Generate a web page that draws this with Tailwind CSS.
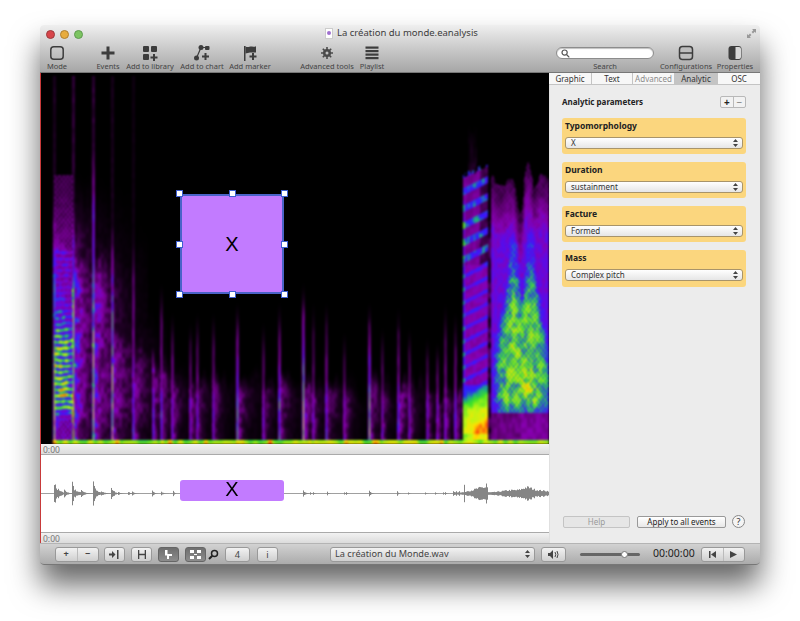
<!DOCTYPE html>
<html lang="en">
<head>
<meta charset="UTF-8">
<title>La création du monde.eanalysis</title>
<script src="https://cdn.jsdelivr.net/npm/@tailwindcss/browser@4"></script>
</head>
<body class="bg-white font-['Noto_Sans',sans-serif] text-[#333]">
<div class="w-[800px] h-[621px] pt-[25px] pl-[40px] overflow-hidden">
  <div class="w-[720px] h-[540px] flex flex-col rounded-[4px] shadow-[0_20px_30px_rgba(0,0,0,0.6)]">

    <!-- title bar + toolbar -->
    <div class="relative h-[48px] shrink-0 rounded-t-[4px] bg-linear-to-b from-[#efefef] to-[#a6a6a6] border-b border-[#777]">
      <div class="flex items-center gap-[5px] pl-[6px] pt-[3px] h-[15px]">
        <span class="w-[9px] h-[9px] rounded-full bg-[#d8454a] border border-[#9c3a3c]"></span>
        <span class="w-[9px] h-[9px] rounded-full bg-[#e8ac3e] border border-[#b08030]"></span>
        <span class="w-[9px] h-[9px] rounded-full bg-[#7cc461] border border-[#5f9a50]"></span>
      </div>
      <div class="absolute top-[1px] left-[285px] flex items-center gap-[4px] text-[9.500px] leading-[14px] text-[#3c3c3c] whitespace-nowrap">
        <span class="w-[8px] h-[11px] bg-white border border-[#ccc] flex items-center justify-center"><span class="w-[4px] h-[4px] rounded-full bg-[#a070d0]"></span></span>
        La création du monde.eanalysis
      </div>
      <svg class="absolute top-[3px] right-[3px]" width="11" height="11" viewBox="0 0 11 11" fill="#999"><path d="M6 1h4v4l-1.300-1.300L7 5.400 5.600 4l1.700-1.700zM5 10H1V6l1.300 1.300L4 5.600 5.400 7 3.700 8.700z"/></svg>

      <div class="flex items-start mt-[4px] text-[7.500px] leading-[10px] text-[#444]">
        <div class="w-[34px] flex flex-col items-center">
          <svg width="18" height="18" viewBox="0 0 18 18"><rect x="2.800" y="2.800" width="12.400" height="12.400" rx="3" fill="none" stroke="#3d3d3d" stroke-width="1.500"/></svg>
          <span class="-mt-[1px]">Mode</span>
        </div>
        <div class="w-[34px] ml-[17px] flex flex-col items-center">
          <svg width="18" height="18" viewBox="0 0 18 18"><path d="M7.500 2.500h3v5h5v3h-5v5h-3v-5h-5v-3h5z" fill="#3d3d3d"/></svg>
          <span class="-mt-[1px]">Events</span>
        </div>
        <div class="w-[48px] ml-[1px] flex flex-col items-center whitespace-nowrap">
          <svg width="18" height="18" viewBox="0 0 18 18" fill="#3d3d3d"><rect x="2" y="2" width="6" height="6" rx="1"/><rect x="10" y="2" width="6" height="6" rx="1"/><rect x="2" y="10" width="6" height="6" rx="1"/><path d="M12 10h2v2.500h2.500v2H14V17h-2v-2.500H9.500v-2H12z"/></svg>
          <span class="-mt-[1px]">Add to library</span>
        </div>
        <div class="w-[48px] ml-[4px] flex flex-col items-center whitespace-nowrap">
          <svg width="18" height="18" viewBox="0 0 18 18" fill="#3d3d3d"><circle cx="8" cy="3.500" r="2.500"/><rect x="12" y="2" width="4.500" height="4" rx="1"/><circle cx="3.500" cy="14" r="2.500"/><path d="M8 3.500h6M8 3.500 3.500 14" stroke="#3d3d3d" stroke-width="1.200"/><path d="M11.500 9h2v2.500H16v2h-2.500V16h-2v-2.500H9v-2h2.500z"/></svg>
          <span class="-mt-[1px]">Add to chart</span>
        </div>
        <div class="w-[44px] ml-[2px] flex flex-col items-center whitespace-nowrap">
          <svg width="18" height="18" viewBox="0 0 18 18" fill="#3d3d3d"><path d="M3 2h1.500v15H3z"/><path d="M4.500 2.500c3 1.500 4-.5 6.500 0s3 .5 4-.5v6.500H9l-4.500 1z"/><path d="M11 9h2v2.500h2.500v2H13V16h-2v-2.500H8.500v-2H11z"/></svg>
          <span class="-mt-[1px]">Add marker</span>
        </div>
        <div class="w-[52px] ml-[29px] flex flex-col items-center whitespace-nowrap">
          <svg width="18" height="18" viewBox="0 0 18 18" fill="#4a4a4a"><path d="M9 3v12M3 9h12M4.800 4.800l8.400 8.400M13.200 4.800l-8.400 8.400" stroke="#4a4a4a" stroke-width="1.600"/><circle cx="9" cy="9" r="4"/><circle cx="9" cy="9" r="1.500" fill="#c2c2c2"/></svg>
          <span class="-mt-[1px]">Advanced tools</span>
        </div>
        <div class="w-[28px] ml-[5px] flex flex-col items-center">
          <svg width="18" height="18" viewBox="0 0 18 18" fill="#3d3d3d"><rect x="2.500" y="2.500" width="13" height="2.200"/><rect x="2.500" y="6" width="13" height="2.200"/><rect x="2.500" y="9.500" width="13" height="2.200"/><rect x="2.500" y="13" width="13" height="2.200"/></svg>
          <span class="-mt-[1px]">Playlist</span>
        </div>
        <div class="w-[98px] ml-[170px] flex flex-col items-center pt-[3px]">
          <div class="w-full h-[12px] rounded-full bg-white border border-[#8c8c8c] shadow-[inset_0_1px_1px_rgba(0,0,0,0.25)] flex items-center pl-[4px]">
            <svg width="9" height="9" viewBox="0 0 9 9" fill="none" stroke="#555" stroke-width="1.200"><circle cx="3.600" cy="3.600" r="2.600"/><path d="M5.500 5.500 8.300 8.300"/></svg>
          </div>
          <span class="mt-[2px]">Search</span>
        </div>
        <div class="w-[60px] ml-[2px] flex flex-col items-center whitespace-nowrap">
          <svg width="18" height="18" viewBox="0 0 18 18"><rect x="2.500" y="2.500" width="13" height="13" rx="3" fill="#bdbdbd" stroke="#3d3d3d" stroke-width="1.500"/><path d="M2.500 9h13" stroke="#3d3d3d" stroke-width="1.500"/></svg>
          <span class="-mt-[1px]">Configurations</span>
        </div>
        <div class="w-[40px] -ml-[1px] flex flex-col items-center whitespace-nowrap">
          <svg width="18" height="18" viewBox="0 0 18 18"><rect x="2.500" y="2" width="13" height="14" rx="3" fill="#3d3d3d"/><path d="M9.500 3h3.500a2 2 0 0 1 2 2v8a2 2 0 0 1-2 2H9.500z" fill="#d8d8d8"/></svg>
          <span class="-mt-[1px]">Properties</span>
        </div>
      </div>
    </div>

    <!-- main -->
    <div class="flex flex-1 min-h-0">
      <div class="w-[509px] shrink-0 flex flex-col border-l border-[#c83a3a]">
        <div class="relative h-[371px] bg-black overflow-hidden">
          <canvas id="spec" width="508" height="371" class="block blur-[0.8px]"></canvas>
          <div class="absolute left-[139px] top-[121px] w-[104px] h-[100px] bg-[#c27bff] border-2 border-[#4a63c8] flex items-center justify-center text-[20px] text-black font-['Liberation_Sans',sans-serif]">
            X
            <span class="absolute -left-[6px] -top-[6px] w-[7px] h-[7px] bg-white border border-[#3f5fd0]"></span>
            <span class="absolute left-[47px] -top-[6px] w-[7px] h-[7px] bg-white border border-[#3f5fd0]"></span>
            <span class="absolute -right-[6px] -top-[6px] w-[7px] h-[7px] bg-white border border-[#3f5fd0]"></span>
            <span class="absolute -left-[6px] top-[45px] w-[7px] h-[7px] bg-white border border-[#3f5fd0]"></span>
            <span class="absolute -right-[6px] top-[45px] w-[7px] h-[7px] bg-white border border-[#3f5fd0]"></span>
            <span class="absolute -left-[6px] -bottom-[6px] w-[7px] h-[7px] bg-white border border-[#3f5fd0]"></span>
            <span class="absolute left-[47px] -bottom-[6px] w-[7px] h-[7px] bg-white border border-[#3f5fd0]"></span>
            <span class="absolute -right-[6px] -bottom-[6px] w-[7px] h-[7px] bg-white border border-[#3f5fd0]"></span>
          </div>
        </div>
        <div class="h-[11px] bg-linear-to-b from-[#f2f2f2] to-[#dcdcdc] border-b border-[#aaa] text-[8.500px] leading-[11px] pl-[2px] text-[#777]">0:00</div>
        <div class="relative h-[77px] bg-white">
          <canvas id="wave" width="508" height="77" class="block blur-[0.4px]"></canvas>
          <div class="absolute left-[139px] top-[25px] w-[104px] h-[21px] rounded-[3px] bg-[#c27bff] flex justify-center text-[20px] leading-[18px] text-black font-['Liberation_Sans',sans-serif]">X</div>
        </div>
        <div class="h-[11px] bg-linear-to-b from-[#f2f2f2] to-[#dcdcdc] border-t border-[#aaa] text-[8.500px] leading-[11px] pl-[2px] text-[#777]">0:00</div>
      </div>

      <!-- right panel -->
      <div class="flex-1 flex flex-col bg-[#ececec] shadow-[inset_1px_0_0_#e0e0e0]">
        <div class="flex h-[12px] text-[8px] leading-[11px] text-center bg-[#f7f7f7] border-b border-[#c4c4c4]">
          <div class="w-[43px] border-r border-[#c4c4c4]">Graphic</div>
          <div class="w-[41px] border-r border-[#c4c4c4]">Text</div>
          <div class="w-[42px] border-r border-[#c4c4c4] text-[#8c8c8c]">Advanced</div>
          <div class="w-[43px] border-r border-[#c4c4c4] bg-[#c4c4c4]">Analytic</div>
          <div class="flex-1">OSC</div>
        </div>
        <div class="flex items-center justify-between pl-[13px] pr-[14px] mt-[11px] h-[12px]">
          <span class="text-[8px] font-bold text-[#222]">Analytic parameters</span>
          <div class="flex w-[26px] h-[12px] rounded-[2px] border border-[#b8b8b8] bg-[#f2f2f2] text-[10px] leading-[10px] text-center">
            <span class="flex-1 border-r border-[#bbb] font-bold text-[#222]">+</span>
            <span class="flex-1 text-[#777]">−</span>
          </div>
        </div>
        <div class="flex flex-col gap-[8px] pl-[13px] pr-[14px] mt-[10px]">
          <div class="h-[36px] rounded-[3px] bg-[#fbd67e] px-[3px] pt-[2px]">
            <div class="text-[8.500px] leading-[11px] font-bold text-[#222]">Typomorphology</div>
            <div class="mt-[6px] h-[12px] rounded-[3px] border border-[#a8946a] bg-linear-to-b from-white to-[#e6e6e6] flex items-center justify-between pl-[5px] pr-[4px] text-[8px] leading-[10px]"><span>X</span><svg width="5" height="8" viewBox="0 0 5 8" fill="#444"><path d="M2.500 0 5 3H0zM2.500 8 0 5h5z"/></svg></div>
          </div>
          <div class="h-[36px] rounded-[3px] bg-[#fbd67e] px-[3px] pt-[2px]">
            <div class="text-[8.500px] leading-[11px] font-bold text-[#222]">Duration</div>
            <div class="mt-[6px] h-[12px] rounded-[3px] border border-[#a8946a] bg-linear-to-b from-white to-[#e6e6e6] flex items-center justify-between pl-[5px] pr-[4px] text-[8px] leading-[10px]"><span>sustainment</span><svg width="5" height="8" viewBox="0 0 5 8" fill="#444"><path d="M2.500 0 5 3H0zM2.500 8 0 5h5z"/></svg></div>
          </div>
          <div class="h-[36px] rounded-[3px] bg-[#fbd67e] px-[3px] pt-[2px]">
            <div class="text-[8.500px] leading-[11px] font-bold text-[#222]">Facture</div>
            <div class="mt-[6px] h-[12px] rounded-[3px] border border-[#a8946a] bg-linear-to-b from-white to-[#e6e6e6] flex items-center justify-between pl-[5px] pr-[4px] text-[8px] leading-[10px]"><span>Formed</span><svg width="5" height="8" viewBox="0 0 5 8" fill="#444"><path d="M2.500 0 5 3H0zM2.500 8 0 5h5z"/></svg></div>
          </div>
          <div class="h-[37px] rounded-[3px] bg-[#fbd67e] px-[3px] pt-[2px]">
            <div class="text-[8.500px] leading-[11px] font-bold text-[#222]">Mass</div>
            <div class="mt-[6px] h-[12px] rounded-[3px] border border-[#a8946a] bg-linear-to-b from-white to-[#e6e6e6] flex items-center justify-between pl-[5px] pr-[4px] text-[8px] leading-[10px]"><span>Complex pitch</span><svg width="5" height="8" viewBox="0 0 5 8" fill="#444"><path d="M2.500 0 5 3H0zM2.500 8 0 5h5z"/></svg></div>
          </div>
        </div>
        <div class="mt-auto mb-[15px] flex items-center pl-[14px] text-[8px]">
          <div class="w-[67px] h-[12px] rounded-[2px] border border-[#c4c4c4] bg-[#e6e6e6] text-center leading-[10px] text-[#999]">Help</div>
          <div class="w-[89px] h-[12px] ml-[7px] rounded-[2px] border border-[#999] bg-linear-to-b from-white to-[#e8e8e8] text-center leading-[10px] text-[#222] whitespace-nowrap">Apply to all events</div>
          <div class="w-[13px] h-[13px] ml-[6px] rounded-full border border-[#888] bg-[#f4f4f4] text-center text-[9px] leading-[11px] text-[#333]">?</div>
        </div>
      </div>
    </div>

    <!-- bottom bar -->
    <div class="h-[22px] shrink-0 rounded-b-[4px] bg-linear-to-b from-[#d2d2d2] to-[#ababab] border-t border-[#b4b4b4] border-b border-b-[#777] flex items-center pl-[15px] text-[9.200px] text-[#444]">
      <div class="flex w-[44px] h-[15px] rounded-[3px] border border-[#999] bg-linear-to-b from-[#f2f2f2] to-[#cfcfcf] text-center font-bold leading-[12px]">
        <span class="flex-1 border-r border-[#bbb]">+</span><span class="flex-1">−</span>
      </div>
      <div class="w-[21px] h-[15px] ml-[5px] rounded-[3px] border border-[#999] bg-linear-to-b from-[#f2f2f2] to-[#cfcfcf] flex items-center justify-center">
        <svg width="11" height="9" viewBox="0 0 11 9" fill="#444"><path d="M0 3.500h3V1l3.500 3.500L3 8V5.500H0zM8 0h1.500v9H8z"/></svg>
      </div>
      <div class="w-[21px] h-[15px] ml-[6px] rounded-[3px] border border-[#999] bg-linear-to-b from-[#f2f2f2] to-[#cfcfcf] flex items-center justify-center">
        <svg width="10" height="9" viewBox="0 0 10 9" fill="#444"><path d="M1 0h1.300v3.800h5.400V0H9v9H7.700V5.200H2.300V9H1z"/></svg>
      </div>
      <div class="w-[21px] h-[15px] ml-[6px] rounded-[3px] border border-[#666] bg-linear-to-b from-[#6e6e6e] to-[#8c8c8c] flex items-center justify-center">
        <svg width="9" height="9" viewBox="0 0 9 9" fill="#fff"><path d="M1 0h2.500v4H8v2H5v3H3V5.500H1z"/></svg>
      </div>
      <div class="w-[21px] h-[15px] ml-[6px] rounded-[3px] border border-[#666] bg-linear-to-b from-[#6e6e6e] to-[#8c8c8c] flex items-center justify-center">
        <svg width="11" height="9" viewBox="0 0 11 9" fill="#fff"><path d="M0 0h4v3H0zM7 0h4v3H7zM0 6h4v3H0zM7 6h4v3H7zM4 4h3v1H4z"/></svg>
      </div>
      <svg class="ml-[2px]" width="11" height="11" viewBox="0 0 11 11" fill="none" stroke="#222" stroke-width="1.500"><circle cx="6.500" cy="4.500" r="3"/><path d="M4.300 6.700 1 10" stroke-width="2"/></svg>
      <div class="w-[25px] h-[15px] ml-[6px] rounded-[3px] border border-[#999] bg-linear-to-b from-[#f2f2f2] to-[#cfcfcf] text-center leading-[13px]">4</div>
      <div class="w-[21px] h-[15px] ml-[7px] rounded-[3px] border border-[#999] bg-linear-to-b from-[#f2f2f2] to-[#cfcfcf] text-center leading-[13px]">i</div>
      <div class="w-[205px] h-[15px] ml-[52px] rounded-[3px] border border-[#999] bg-linear-to-b from-[#f2f2f2] to-[#cfcfcf] flex items-center justify-between pl-[4px] pr-[4px]">
        <span>La création du Monde.wav</span>
        <svg width="5" height="8" viewBox="0 0 5 8" fill="#444"><path d="M2.500 0 5 3H0zM2.500 8 0 5h5z"/></svg>
      </div>
      <div class="w-[25px] h-[15px] ml-[6px] rounded-[3px] border border-[#999] bg-linear-to-b from-[#f2f2f2] to-[#cfcfcf] flex items-center justify-center">
        <svg width="11" height="9" viewBox="0 0 11 9" fill="#444"><path d="M0 3h2l3-3v9L2 6H0z"/><path d="M7 2q1.500 2.500 0 5M9 1q2 3.500 0 7" fill="none" stroke="#444"/></svg>
      </div>
      <div class="relative w-[60px] h-[3px] ml-[14px] rounded-full bg-[#666]">
        <span class="absolute left-[41px] -top-[2px] w-[7px] h-[7px] rounded-full bg-white border border-[#777]"></span>
      </div>
      <span class="w-[48px] ml-[13px] text-[10.500px] text-[#222] whitespace-nowrap">00:00:00</span>
      <div class="flex w-[44px] h-[15px] rounded-[3px] border border-[#999] bg-linear-to-b from-[#f2f2f2] to-[#cfcfcf]">
        <span class="flex-1 border-r border-[#bbb] flex items-center justify-center"><svg width="7" height="7" viewBox="0 0 7 7" fill="#444"><path d="M0 0h1.500v7H0zM7 0v7L2 3.500z"/></svg></span>
        <span class="flex-1 flex items-center justify-center"><svg width="7" height="7" viewBox="0 0 7 7" fill="#444"><path d="M0 0l7 3.500L0 7z"/></svg></span>
      </div>
    </div>
  </div>
</div>

<script>
  // spectrogram and waveform are data, so they get painted from a small model
  let seed = 7;
  function rnd() { seed = (seed * 16807) % 2147483647; return seed / 2147483647; }
  function hash(a, b) { const s = Math.sin(a * 127.1 + b * 311.7) * 43758.5453; return s - Math.floor(s); }
  function sstep(a, b, x) { const t = Math.min(1, Math.max(0, (x - a) / (b - a))); return t * t * (3 - 2 * t); }
  function noise(x, y, sx, sy) {
    const fx = x / sx, fy = y / sy, ix = Math.floor(fx), iy = Math.floor(fy);
    const u = sstep(0, 1, fx - ix), v = sstep(0, 1, fy - iy);
    const a = hash(ix, iy) + (hash(ix + 1, iy) - hash(ix, iy)) * u;
    const b = hash(ix, iy + 1) + (hash(ix + 1, iy + 1) - hash(ix, iy + 1)) * u;
    return a + (b - a) * v;
  }

  const stops = [[0,0,0,0],[.12,30,0,35],[.28,95,0,115],[.42,135,0,175],[.52,90,10,235],[.6,45,30,255],[.68,30,170,130],[.76,60,225,40],[.84,190,245,20],[.91,255,225,0],[1,250,50,10]];
  function colour(v) {
    v = Math.min(1, Math.max(0, v));
    for (let i = 1; i < stops.length; i++) {
      if (v <= stops[i][0]) {
        const a = stops[i-1], b = stops[i], t = (v - a[0]) / (b[0] - a[0]);
        return [a[1]+(b[1]-a[1])*t, a[2]+(b[2]-a[2])*t, a[3]+(b[3]-a[3])*t];
      }
    }
    return [250,50,10];
  }

  // x, top of tail, tail length, tail level, line top, line level (page coordinates)
  const events = [
    [54,175,26,.54,158,.78],[73,225,16,.7,175,.98],[93,225,18,.6,100,.84],[112,310,18,.5,200,.82],
    [133,335,14,.42,215,.5],[153,345,9,.42,340,.5],[161,350,9,.4,280,.5],[172,360,9,.4,310,.46],
    [190,365,8,.38,320,.4],[197,365,8,.38,310,.42],[213,370,8,.38,310,.42],[237,365,10,.44,300,.62],
    [263,375,8,.38,320,.4],[279,370,10,.44,300,.58],[303,372,12,.5,280,.78],[313,380,6,.38,300,.38],
    [326,372,10,.44,300,.48],[344,385,7,.38,330,.4],[369,372,10,.44,300,.7],[382,385,7,.36,325,.38],
    [398,372,12,.44,305,.46],[409,385,7,.36,325,.4],[427,390,7,.36,335,.38],[437,390,6,.38,340,.4],
    [445,380,7,.4,300,.4],[455,380,8,.44,310,.44]
  ];
  const faint = { 54: .14, 73: .2, 93: .2, 112: .12, 133: .08 };

  function specValue(X, Y) {
    const cell = hash(Math.floor(X / 2), Math.floor(Y / 3));
    const tex = 0.5 + 0.5 * Math.sin(X * 1.5 + noise(X, Y, 9, 9) * 2) * Math.sin(Y * 1.15 + noise(X, Y, 7, 11) * 2);
    const n = noise(X, Y, 3, 5);
    // floor row
    if (Y >= 440 && X >= 53) {
      const hit = noise(X, 1, 5, 1);
      return (Y < 442 ? .72 : .78) + hit * .14 + (hash(Math.floor(X / 4), 9) > .93 ? .09 : 0);
    }
    // right hand block with the slanted partials
    if (X >= 463 && X < 488) {
      if (Y < 172 - (X - 463) * .4 + cell * 6) return Y > 120 && X > 467 && X < 477 ? .16 * n * sstep(120, 170, Y) : 0;
      let v = .36 + n * .1;
      const period = Y < 265 ? 17 : 13;
      const stripe = Math.sin((Y + (X - 463) * .5) / period * 6.283);
      if (Y < 265) v += stripe > .2 ? .16 + n * .08 : -.05 - (X > 479 ? .16 : 0);
      else if (Y < 385) v += stripe > .55 ? .14 : 0;
      if (X < 465 && Y > 200) v += .12;
      if (Y >= 385) {
        const k = (Y - 385) / 52, r = (X - 463) / 25;
        v = .56 + .2 * sstep(.05, .45, k + r * .25) + .1 * sstep(.3, .7, k + r * .2) + .1 * sstep(.55, .85, k * (.5 + r * .7)) + (n - .5) * .08;
        if (Y > 433) v -= .06;
      }
      return v;
    }
    if (X >= 488) {
      if (X < 491) return Y > 220 ? .3 * n : 0;
      const notch = Math.exp(-Math.pow((X - 520) / 3.5, 2)) * 40;
      const top = 172 + notch + noise(X, 3, 4, 1) * 18 - (Math.abs(X - 528) < 5 ? 12 : 0);
      if (Y < top) return 0;
      let v = .12 + .28 * sstep(top, top + 60, Y) + tex * .1 + n * .06;
      if (Y > 412) return .24 + n * .14 + (X > 520 ? .06 : 0);
      const grow = sstep(250, 385, Y);
      const hw = 4 + 14 * grow;
      const lobe = Math.max(Math.exp(-Math.pow((X - 513) / hw, 2)), Math.exp(-Math.pow((X - 530) / hw, 2)));
      const blue = sstep(.1, .6, lobe) * sstep(215, 270, Y);
      const green = lobe * sstep(255, 320, Y) * (1 - sstep(398, 412, Y) * .7);
      v += (.17 * blue + .2 * green) * (.5 + .5 * tex + (n - .5) * .3) + (n - .5) * .05;
      v += .07 * sstep(345, 385, Y) * (1 - sstep(398, 412, Y)) * Math.exp(-Math.pow((X - 527) / 9, 2)) * (.4 + .8 * n);
      return Math.min(v, .93);
    }
    let best = 0;
    for (const [x, top, len, lvl, lineTop, lineLvl] of events) {
      const dx = X - x;
      if (dx < -4 || dx > len * 3) continue;
      const gauss = Math.exp(-dx * dx / 1.8);
      if (faint[x] && Y > 75) best = Math.max(best, faint[x] * gauss * (.7 + n * .5));
      const rise = (Y - lineTop) / (440 - lineTop);
      if (rise > 0) {
        const streak = noise(X, Y, 2, 9);
        const line = lineLvl * sstep(0, .3, rise) * (.5 + .5 * sstep(0, .8, rise)) * (.72 + streak * .4);
        best = Math.max(best, (line + .12 * sstep(378, 405, Y)) * gauss);
      }
      if (dx >= -1) {
        const wob = top + (noise(X, 5, 4, 1) - .5) * 22;
        if (Y > wob) {
          const t = (Y - wob) / (440 - wob);
          let tail = lvl * sstep(0, .35, t) * Math.exp(-Math.max(0, dx) / len);
          tail *= 1 - .4 * sstep(405, 432, Y) * sstep(2, 6, dx);
          tail *= .5 + .75 * n + .2 * (tex - .5);
          best = Math.max(best, tail);
        }
      }
    }
    // the first hit is dense with partials: speckle from the top, green further down
    if (X >= 54 && X < 73) {
      if (Y >= 175) best = Math.max(best, (.2 + .18 * sstep(175, 300, Y)) * (.45 + tex * .9 + n * .25));
      if (Y > 250 && Y < 420) {
        const lvl = .5 + .34 * sstep(285, 355, Y) * (1 - sstep(405, 420, Y) * .9);
        const band = 0.5 + 0.5 * Math.sin(Y * 1.05 + noise(X, Y, 6, 20) * 3);
        best = Math.max(best, lvl * (.72 + .38 * band) * (.75 + n * .4) * (1 - .1 * sstep(62, 72, X)));
      }
    }
    return best;
  }

  const spec = document.getElementById('spec').getContext('2d');
  const img = spec.createImageData(508, 371);
  for (let y = 0; y < 371; y++) {
    for (let x = 0; x < 508; x++) {
      const c = colour(specValue(x + 41, y + 73));
      const i = (y * 508 + x) * 4;
      img.data[i] = c[0]; img.data[i+1] = c[1]; img.data[i+2] = c[2]; img.data[i+3] = 255;
    }
  }
  spec.putImageData(img, 0, 0);

  // waveform: centre line plus decaying bursts (page x, half height, decay)
  const wave = document.getElementById('wave').getContext('2d');
  wave.fillStyle = '#a0a0a0';
  wave.fillRect(0, 38, 508, 1);
  wave.fillStyle = '#858585';
  const bursts = [[54,13,3],[58,5,4],[64,4,3],[72,13,2],[75,4,5],[81,4,3],[93,13,2],[95,5,4],[101,3,3],[111,8,1.500],[113,4,2],
    [118,2,2],[128,2,2],[132,2,2],[152,4,1.500],[161,2,2],[173,3,1],
    [303,3.500,2],[310,1.500,1],[313,1.500,1],[327,2,1],[344,1.500,1],[346,1.500,1],[369,3,1.500],[397,2.500,1],[408,1.500,1],[425,1.500,1],[435,1.500,1],[443,1.500,1],[445,1.500,1],[453,2,1]];
  for (const [x, amp, len] of bursts) {
    for (let i = 0; i < len * 4; i++) {
      const h = amp * Math.exp(-i / len) * (.65 + rnd() * .35);
      wave.fillRect(x - 41 + i, 38.5 - h, 1, h * 2);
    }
  }
  for (let X = 453; X < 549; X++) {
    let env = 0;
    if (X < 460) env = X % 3 === 0 ? 3.500 : 1.500;
    else if (X < 466) env = X === 464 ? 11 : 1.500;
    else if (X < 488) env = 3 + 4.500 * sstep(466, 484, X) + (X === 486 ? 5 : 0);
    else env = 1.500 + 2.500 * sstep(490, 512, X) + 3.500 * Math.exp(-Math.pow((X - 527) / 6, 2)) - 1 * sstep(535, 549, X);
    const h = env * (.6 + rnd() * .4);
    wave.fillRect(X - 41, 38.5 - h, 1, h * 2);
  }
</script>
</body>
</html>
